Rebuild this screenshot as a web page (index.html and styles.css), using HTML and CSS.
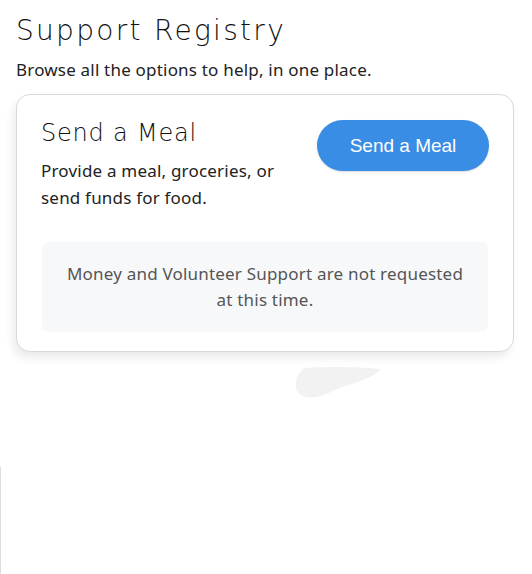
FILE: index.html
```html
<!DOCTYPE html>
<html lang="en">
<head>
<meta charset="UTF-8">
<meta name="viewport" content="width=device-width, initial-scale=1.0">
<title>Support Registry</title>
<link rel="stylesheet" href="styles.css">
</head>
<body>
<div class="page">
  <h1 class="title">Support Registry</h1>
  <p class="lead">Browse all the options to help, in one place.</p>

  <!-- Meal card -->
  <div class="card">
    <div class="card-top">
      <div class="card-text">
        <h2 class="card-title">Send a Meal</h2>
        <p class="card-desc">Provide a meal, groceries, or send funds for food.</p>
      </div>
      <button class="btn">Send a Meal</button>
    </div>
    <div class="notice">Money and Volunteer Support are not requested at this time.</div>
  </div>

  <svg class="smudge" width="90" height="34" viewBox="0 0 90 34">
    <path d="M12 2 C35 0 70 1 87 3 C80 12 60 17 45 22 C35 27 25 33 12 31 C2 29 0 20 3 12 C5 6 8 3 12 2 Z" fill="#f2f2f2"/>
  </svg>
  <div class="edge"></div>
</div>
</body>
</html>
```

FILE: styles.css
```css
body {
  margin: 0;
  padding: 0;
  background-color: #fff;
  color: #222;
  font-family: "Noto Sans", Arial, sans-serif;
}

.page {
  position: relative;
  height: 574px;
  padding: 12px 18px 0 16px;
  box-sizing: border-box;
  overflow: hidden;
}

.title {
  margin: 0;
  font-family: "DejaVu Sans", sans-serif;
  font-weight: 200;
  font-size: 28px;
  letter-spacing: 2.3px;
  line-height: 38px;
  color: #111;
}

.lead {
  margin: 9px 0 13px;
  font-size: 17px;
  letter-spacing: 0.2px;
  line-height: 22px;
  color: #222;
}

.card {
  border: 1px solid #d9d9d9;
  border-radius: 14px;
  background-color: #fff;
  box-shadow: -3px 6px 8px rgba(0,0,0,0.08);
  padding: 24px 24px 19px 24px;
}

.card-top {
  display: flex;
  justify-content: space-between;
  align-items: flex-start;
}

.card-text {
  width: 260px;
}

.card-title {
  margin: 0;
  font-family: "DejaVu Sans", sans-serif;
  font-weight: 200;
  font-size: 24px;
  letter-spacing: 0.8px;
  line-height: 28px;
  color: #111;
}

.card-desc {
  margin: 10px 0 0;
  font-size: 17px;
  letter-spacing: 0.2px;
  line-height: 27px;
  color: #222;
}

.btn {
  width: 172px;
  height: 51px;
  margin-top: 1px;
  border: none;
  border-radius: 26px;
  background-color: #398de4;
  color: #fff;
  font-family: "Liberation Sans", Arial, sans-serif;
  font-size: 19px;
  box-shadow: 0 1px 2px rgba(0,0,0,0.15);
  cursor: pointer;
}

.notice {
  margin: 31px 1px 0 1px;
  padding: 19px 20px;
  border-radius: 7px;
  background-color: #f7f8fa;
  text-align: center;
  font-size: 17px;
  letter-spacing: 0.2px;
  line-height: 26px;
  color: #555;
}

.smudge {
  position: absolute;
  left: 294px;
  top: 366px;
}

.edge {
  position: absolute;
  left: 0;
  top: 467px;
  width: 1px;
  height: 107px;
  background-color: #ddd;
}
```
